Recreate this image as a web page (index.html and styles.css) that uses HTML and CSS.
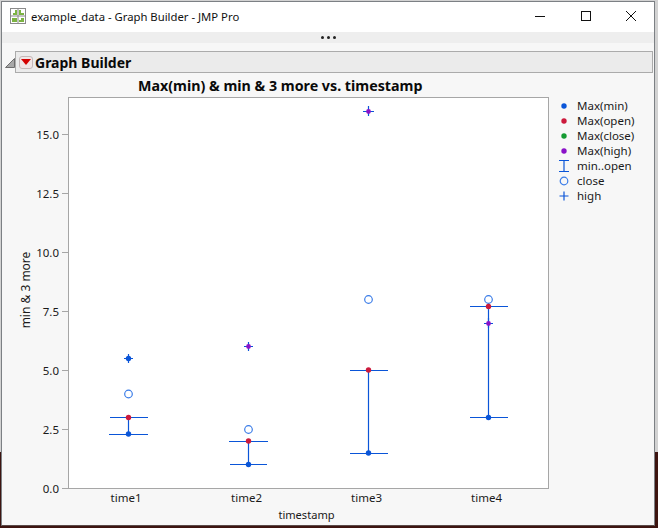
FILE: index.html
```html
<!DOCTYPE html>
<html lang="en">
<head>
<meta charset="utf-8">
<title>example_data - Graph Builder - JMP Pro</title>
<link rel="stylesheet" href="styles.css">
</head>
<body>
<div class="window">
  <header class="titlebar">
    <svg class="app-icon" width="16" height="16" viewBox="0 0 16 16">
      <rect x="0.5" y="0.5" width="15" height="15" fill="#fff" stroke="#8a8a8a"/>
      <path d="M8 0V16M0 8H16" stroke="#8a8a8a"/>
      <path d="M3 7V5H5V2H7V7ZM9 7V2H11V5H14V7ZM2 14V10H7V14ZM9 14V12H11V10H14V14Z" fill="#7cb342"/>
    </svg>
    <span class="title-text">example_data - Graph Builder - JMP Pro</span>
    <div class="controls">
      <span class="control"><svg width="10" height="10" viewBox="0 0 10 10"><path d="M0 5.500H10" stroke="#111"/></svg></span>
      <span class="control"><svg width="10" height="10" viewBox="0 0 10 10"><rect x="0.5" y="0.5" width="9" height="9" fill="none" stroke="#111"/></svg></span>
      <span class="control"><svg width="10" height="10" viewBox="0 0 10 10"><path d="M0 0L10 10M10 0L0 10" stroke="#111"/></svg></span>
    </div>
  </header>
  <div class="toolstrip"><i class="dot"></i><i class="dot"></i><i class="dot"></i></div>
  <div class="content">
    <div class="outline-row">
      <svg class="disclosure" width="10" height="10" viewBox="0 0 10 10"><path d="M9.5 0.5V9.5H0.5Z" fill="#a8a8a8" stroke="#6e6e6e"/></svg>
      <div class="outline-box">
        <span class="menu-btn"><svg width="10" height="6" viewBox="0 0 10 6"><path d="M0 0H10L5 6Z" fill="#d40000"/></svg></span>
        <span class="outline-title">Graph Builder</span>
      </div>
    </div>
    <h1 class="chart-title">Max(min) &amp; min &amp; 3 more vs. timestamp</h1>
    <div class="chart-row">
      <svg class="chart" width="552" height="429" viewBox="2 96 552 429">
        <rect class="plot" x="68.5" y="97.5" width="480" height="391"/>
        <g class="ticks">
          <path d="M62 134.500H68M62 193.500H68M62 252.500H68M62 311.500H68M62 370.500H68M62 429.500H68M62 488.500H68"/>
        </g>
        <g class="axis-text">
          <text class="end" x="59" y="139">15.0</text>
          <text class="end" x="59" y="198">12.5</text>
          <text class="end" x="59" y="257">10.0</text>
          <text class="end" x="59" y="316">7.5</text>
          <text class="end" x="59" y="375">5.0</text>
          <text class="end" x="59" y="434">2.5</text>
          <text class="end" x="59" y="493">0.0</text>
          <text class="mid" x="126" y="502">time1</text>
          <text class="mid" x="246.500" y="502">time2</text>
          <text class="mid" x="366.500" y="502">time3</text>
          <text class="mid" x="486.500" y="502">time4</text>
          <text class="mid axis-x" x="306.500" y="519">timestamp</text>
          <text class="mid axis-y" transform="translate(30 290) rotate(-90)">min &amp; 3 more</text>
        </g>
        <path class="range" d="M128.500 417.500V434.500M110 417.500H148M109 434.500H148M248.500 441.500V464.500M229 441.500H268M230 464.500H267M368.500 370.500V453.500M350 370.500H388M350 453.500H388M488.500 306.500V417.500M470 306.500H508M470 417.500H508"/>
        <g class="ring">
          <circle cx="128.500" cy="394" r="3.800"/>
          <circle cx="248.500" cy="429.500" r="3.800"/>
          <circle cx="368.500" cy="299.500" r="3.800"/>
          <circle cx="488.500" cy="299.500" r="3.800"/>
        </g>
        <path class="range" d="M128.500 354V363M124 358.500H133M248.500 342V351M244 346.500H253M368.500 106V116M363 111.500H374M488.500 318V328M484 323.500H493"/>
        <g class="m-blue">
          <circle cx="128.500" cy="434" r="2.700"/>
          <circle cx="248.500" cy="464.500" r="2.700"/>
          <circle cx="368.500" cy="453" r="2.700"/>
          <circle cx="488.500" cy="417.500" r="2.700"/>
          <circle cx="128.500" cy="358.500" r="2.700"/>
        </g>
        <g class="m-red">
          <circle cx="128.500" cy="417.500" r="2.700"/>
          <circle cx="248.500" cy="441" r="2.700"/>
          <circle cx="368.500" cy="370" r="2.700"/>
          <circle cx="488.500" cy="306.500" r="2.700"/>
        </g>
        <g class="m-purple">
          <circle cx="248.500" cy="346.500" r="2.400"/>
          <circle cx="368.500" cy="111.500" r="2.400"/>
          <circle cx="488.500" cy="323.500" r="2.400"/>
        </g>
      </svg>
      <ul class="legend">
        <li class="legend-item"><svg class="key" width="14" height="14" viewBox="0 0 14 14"><circle class="key-blue" cx="7" cy="7" r="2.700"/></svg>Max(min)</li>
        <li class="legend-item"><svg class="key" width="14" height="14" viewBox="0 0 14 14"><circle class="key-red" cx="7" cy="7" r="2.700"/></svg>Max(open)</li>
        <li class="legend-item"><svg class="key" width="14" height="14" viewBox="0 0 14 14"><circle class="key-green" cx="7" cy="7" r="2.700"/></svg>Max(close)</li>
        <li class="legend-item"><svg class="key" width="14" height="14" viewBox="0 0 14 14"><circle class="key-purple" cx="7" cy="7" r="2.700"/></svg>Max(high)</li>
        <li class="legend-item"><svg class="key" width="14" height="14" viewBox="0 0 14 14"><path class="key-line" d="M2 1.500H12M2 12.500H12M7 1.500V12.500"/></svg>min..open</li>
        <li class="legend-item"><svg class="key" width="14" height="14" viewBox="0 0 14 14"><circle class="key-ring" cx="7" cy="7" r="3.800"/></svg>close</li>
        <li class="legend-item"><svg class="key" width="14" height="14" viewBox="0 0 14 14"><path class="key-line" d="M7 2.500V11.500M2.500 7H11.500"/></svg>high</li>
      </ul>
    </div>
  </div>
</div>
</body>
</html>
```

FILE: styles.css
```css
* { box-sizing: border-box; }

html, body {
  margin: 0;
  padding: 0;
}

body {
  width: 658px;
  height: 528px;
  overflow: hidden;
  padding: 1px 3px 2px 1px;
  font-family: "Noto Sans", "Open Sans", sans-serif;
  color: #1a1a1a;
  background:
    linear-gradient(to bottom, #d2d2d2 0, #d2d2d2 452px, #3d1410 452px, #3d1410 100%);
}

.window {
  width: 654px;
  height: 525px;
  display: flex;
  flex-direction: column;
  border: 1px solid #7c8084;
  border-bottom-color: #5a4a48;
  background: #f7f7f7;
}

.titlebar {
  height: 30px;
  flex: none;
  display: flex;
  align-items: center;
  padding-left: 8px;
  padding-bottom: 2px;
  background: #fff;
}

.app-icon { flex: none; }

.title-text {
  margin-left: 5px;
  font-size: 11.300px;
  color: #111;
  white-space: nowrap;
}

.controls {
  margin-left: auto;
  display: flex;
}

.control {
  width: 45.500px;
  height: 28px;
  display: flex;
  align-items: center;
  justify-content: center;
}

.toolstrip {
  height: 11px;
  flex: none;
  display: flex;
  align-items: center;
  justify-content: center;
  gap: 3px;
  background: #eeeeee;
}

.dot {
  width: 3px;
  height: 3px;
  border-radius: 50%;
  background: #222;
}

.content {
  flex: 1;
  display: flex;
  flex-direction: column;
  min-height: 0;
}

.outline-row {
  display: flex;
  align-items: center;
  height: 22px;
  margin-top: 8px;
  padding-left: 3px;
}

.disclosure { flex: none; margin-top: 2px; }

.outline-box {
  width: 638px;
  height: 22px;
  display: flex;
  align-items: center;
  padding-left: 3px;
  background: #ebebeb;
  border: 1px solid #ababab;
}

.menu-btn {
  width: 14px;
  height: 13px;
  flex: none;
  display: flex;
  align-items: center;
  justify-content: center;
  background: #f0e6e6;
  border: 1px solid #c4b8b8;
  border-radius: 3px;
}

.outline-title {
  margin-left: 2px;
  font-size: 14px;
  font-weight: 700;
  color: #0a0a0a;
  white-space: nowrap;
}

.chart-title {
  margin: 3px 0 0;
  height: 20px;
  padding-left: 136px;
  font-size: 14.250px;
  line-height: 20px;
  font-weight: 700;
  color: #0a0a0a;
  white-space: nowrap;
}

.chart-row {
  display: flex;
  flex: 1;
  min-height: 0;
}

.chart {
  display: block;
  flex: none;
}

.plot {
  fill: #fff;
  stroke: #a6a6a6;
}

.ticks path {
  fill: none;
  stroke: #a6a6a6;
}

.axis-text text {
  font-family: "Noto Sans", "Open Sans", sans-serif;
  font-size: 11.500px;
  fill: #1a1a1a;
}

.axis-text .axis-x { font-size: 11.100px; }
.axis-text .axis-y { font-size: 12px; }

.end { text-anchor: end; }
.mid { text-anchor: middle; }

.range {
  fill: none;
  stroke: #0a55d8;
  stroke-width: 1.200;
}

.ring circle {
  fill: none;
  stroke: #3a7ce8;
  stroke-width: 1.200;
}

.m-blue circle { fill: #0a55d8; }
.m-red circle { fill: #cc1a3c; }
.m-purple circle { fill: #8a12c8; }

.legend {
  list-style: none;
  margin: 2px 0 0;
  padding: 0 0 0 3px;
}

.legend-item {
  height: 15px;
  display: flex;
  align-items: center;
  gap: 6px;
  font-size: 11.500px;
  white-space: nowrap;
  color: #1a1a1a;
}

.key { flex: none; }
.key-blue { fill: #0a55d8; }
.key-red { fill: #cc1a3c; }
.key-green { fill: #149a32; }
.key-purple { fill: #8a12c8; }
.key-line { fill: none; stroke: #0a55d8; stroke-width: 1.200; }
.key-ring { fill: none; stroke: #3a7ce8; stroke-width: 1.200; }
```
